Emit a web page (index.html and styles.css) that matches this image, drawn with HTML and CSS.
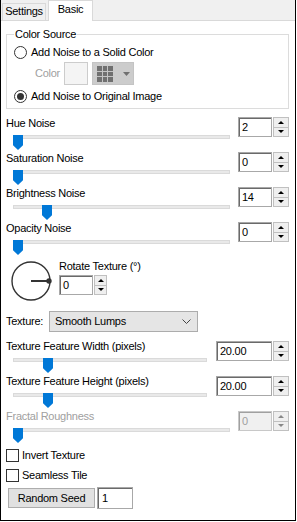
FILE: index.html
```html
<!DOCTYPE html>
<html lang="en">
<head>
    <meta charset="UTF-8">
    <meta name="viewport" content="width=device-width, initial-scale=1.0">
    <title>Noise Effect</title>
    <link rel="stylesheet" href="styles.css">
</head>
<body>
    <div class="window">
        <div class="tabs">
            <div class="tab">Settings</div>
            <div class="tab tab-active">Basic</div>
        </div>
        <div class="page">
            <fieldset class="group">
                <legend>Color Source</legend>
                <div class="option"><span class="radio"></span>Add Noise to a Solid Color</div>
                <div class="color-row">
                    <span class="color-label">Color</span>
                    <span class="swatch"></span>
                    <span class="palette-btn">
                        <svg width="16" height="16" viewBox="0 0 16 16">
                            <rect x="0" y="0" width="16" height="16" fill="#707070"/>
                            <rect x="5" y="0" width="1" height="16" fill="#c4c4c4"/>
                            <rect x="10" y="0" width="1" height="16" fill="#c4c4c4"/>
                            <rect x="0" y="5" width="16" height="1" fill="#c4c4c4"/>
                            <rect x="0" y="10" width="16" height="1" fill="#c4c4c4"/>
                        </svg>
                        <svg class="palette-arrow" width="7" height="4" viewBox="0 0 7 4">
                            <polygon points="0,0 7,0 3.5,4" fill="#707070"/>
                        </svg>
                    </span>
                </div>
                <div class="option option-last"><span class="radio checked"></span>Add Noise to Original Image</div>
            </fieldset>

            <div class="slider-row first">
                <div class="slider-main">
                    <div class="label">Hue Noise</div>
                    <div class="slider"><div class="track"></div><div class="thumb" style="left: 0px"></div></div>
                </div>
                <div class="spin">
                    <div class="spin-value">2</div>
                    <div class="spin-arrows"><span class="up"></span><span class="down"></span></div>
                </div>
            </div>

            <div class="slider-row">
                <div class="slider-main">
                    <div class="label">Saturation Noise</div>
                    <div class="slider"><div class="track"></div><div class="thumb" style="left: 0px"></div></div>
                </div>
                <div class="spin">
                    <div class="spin-value">0</div>
                    <div class="spin-arrows"><span class="up"></span><span class="down"></span></div>
                </div>
            </div>

            <div class="slider-row">
                <div class="slider-main">
                    <div class="label">Brightness Noise</div>
                    <div class="slider"><div class="track"></div><div class="thumb" style="left: 29px"></div></div>
                </div>
                <div class="spin">
                    <div class="spin-value">14</div>
                    <div class="spin-arrows"><span class="up"></span><span class="down"></span></div>
                </div>
            </div>

            <div class="slider-row">
                <div class="slider-main">
                    <div class="label">Opacity Noise</div>
                    <div class="slider"><div class="track"></div><div class="thumb" style="left: 0px"></div></div>
                </div>
                <div class="spin">
                    <div class="spin-value">0</div>
                    <div class="spin-arrows"><span class="up"></span><span class="down"></span></div>
                </div>
            </div>

            <div class="rotate-row">
                <svg class="dial" width="42" height="42" viewBox="0 0 42 42">
                    <circle cx="21" cy="21" r="19" fill="none" stroke="#333" stroke-width="1.4"/>
                    <line x1="21" y1="21" x2="39" y2="21" stroke="#333" stroke-width="2"/>
                    <circle cx="39" cy="21" r="2.7" fill="#333"/>
                </svg>
                <div class="rotate-main">
                    <div class="label">Rotate Texture (°)</div>
                    <div class="spin spin-small">
                        <div class="spin-value">0</div>
                        <div class="spin-arrows"><span class="up"></span><span class="down"></span></div>
                    </div>
                </div>
            </div>

            <div class="texture-row">
                <span class="texture-label">Texture:</span>
                <div class="dropdown">
                    <span>Smooth Lumps</span>
                    <svg width="9" height="5" viewBox="0 0 9 5">
                        <polyline points="0.5,0.5 4.5,4.5 8.5,0.5" fill="none" stroke="#444" stroke-width="1"/>
                    </svg>
                </div>
            </div>

            <div class="slider-row lower first-lower">
                <div class="slider-main short">
                    <div class="label">Texture Feature Width (pixels)</div>
                    <div class="slider"><div class="track"></div><div class="thumb" style="left: 30px"></div></div>
                </div>
                <div class="spin spin-wide">
                    <div class="spin-value">20.00</div>
                    <div class="spin-arrows"><span class="up"></span><span class="down"></span></div>
                </div>
            </div>

            <div class="slider-row lower">
                <div class="slider-main short">
                    <div class="label">Texture Feature Height (pixels)</div>
                    <div class="slider"><div class="track"></div><div class="thumb" style="left: 30px"></div></div>
                </div>
                <div class="spin spin-wide">
                    <div class="spin-value">20.00</div>
                    <div class="spin-arrows"><span class="up"></span><span class="down"></span></div>
                </div>
            </div>

            <div class="slider-row lower disabled">
                <div class="slider-main">
                    <div class="label">Fractal Roughness</div>
                    <div class="slider"><div class="track"></div><div class="thumb" style="left: 0px"></div></div>
                </div>
                <div class="spin">
                    <div class="spin-value">0</div>
                    <div class="spin-arrows"><span class="up"></span><span class="down"></span></div>
                </div>
            </div>

            <div class="check-row first-check"><span class="checkbox"></span>Invert Texture</div>
            <div class="check-row"><span class="checkbox"></span>Seamless Tile</div>

            <div class="seed-row">
                <div class="button">Random Seed</div>
                <div class="seed-input">1</div>
            </div>
        </div>
    </div>
</body>
</html>
```

FILE: styles.css
```css
body {
    margin: 0;
    background: #fff;
}
.window {
    width: 294px;
    height: 520px;
    border: 1px solid #000;
    border-top: none;
    background: #fff;
    font-family: "Liberation Sans", Arial, sans-serif;
    font-size: 11px;
    line-height: 13px;
    letter-spacing: -0.25px;
    color: #000;
    overflow: hidden;
}

/* tab strip */
.tabs {
    display: flex;
    align-items: flex-end;
    height: 20px;
    background: #f0f0f0;
    border-bottom: 1px solid #d9d9d9;
}
.tab {
    box-sizing: border-box;
    width: 44px;
    height: 17px;
    margin-left: 1px;
    padding-top: 1px;
    border: 1px solid #d9d9d9;
    border-bottom: none;
    text-align: center;
}
.tab-active {
    width: 45px;
    height: 21px;
    margin-left: 2px;
    margin-bottom: -1px;
    padding-top: 2px;
    background: #fff;
    position: relative;
}

.page {
    padding: 0 6px 0 5px;
}

/* color source group */
.group {
    margin: 7px 0 0;
    padding: 5px 0 4px 7px;
    border: 1px solid #dcdcdc;
    min-width: 0;
}
.group legend {
    padding: 0 1px;
    line-height: 12px;
}
.option {
    display: flex;
    align-items: center;
    height: 15px;
}
.radio {
    box-sizing: border-box;
    width: 13px;
    height: 13px;
    margin-right: 4px;
    border: 1px solid #333;
    border-radius: 50%;
    background: #fff;
    display: flex;
    align-items: center;
    justify-content: center;
}
.radio.checked::after {
    content: "";
    width: 7px;
    height: 7px;
    border-radius: 50%;
    background: #333;
}
.color-row {
    display: flex;
    align-items: center;
    height: 23px;
    margin: 2px 0 4px;
}
.color-label {
    width: 29px;
    margin-left: 21px;
    color: #a0a0a0;
}
.swatch {
    box-sizing: border-box;
    width: 24px;
    height: 23px;
    border: 1px solid #cccccc;
    background: #f4f4f4;
}
.palette-btn {
    box-sizing: border-box;
    width: 42px;
    height: 23px;
    margin-left: 4px;
    padding-left: 4px;
    border: 1px solid #c4c4c4;
    background: #cccccc;
    display: flex;
    align-items: center;
}
.palette-arrow {
    margin-left: 10px;
}

/* slider rows */
.slider-row {
    display: flex;
    justify-content: space-between;
    height: 35px;
}
.slider-row.first {
    margin-top: 8px;
}
.slider-main {
    width: 224px;
}
.slider-main.short {
    width: 201px;
}
.slider {
    position: relative;
    height: 15px;
    margin: 1px 0 0 7px;
}
.lower .slider {
    margin-top: 3px;
}
.track {
    box-sizing: border-box;
    height: 4px;
    margin-top: 5px;
    border: 1px solid #dadada;
    background: #e9e9e9;
}
.thumb {
    position: absolute;
    top: 0;
    width: 10px;
    height: 15px;
    background: #0078d7;
    clip-path: polygon(0 0, 100% 0, 100% 68%, 50% 100%, 0 68%);
}
.disabled .label {
    color: #a0a0a0;
}

/* numeric up/down */
.spin {
    display: flex;
    width: 51px;
    height: 20px;
}
.lower .spin {
    margin-top: 1px;
}
.spin-wide {
    width: 73px;
}
.spin-value {
    flex: 1;
    box-sizing: border-box;
    height: 20px;
    padding: 3px 0 0 3px;
    border: 1px solid #a8a8a8;
    box-shadow: inset 1px 1px 0 #6a6a6a;
    background: #fff;
}
.spin-arrows {
    box-sizing: border-box;
    width: 16px;
    margin-left: 1px;
    border: 1px solid #c0c0c0;
    display: flex;
    flex-direction: column;
}
.spin-arrows span {
    flex: 1;
    display: flex;
    align-items: center;
    justify-content: center;
    background: #efefef;
}
.spin-arrows .up {
    border-bottom: 1px solid #c0c0c0;
}
.spin-arrows .up::after {
    content: "";
    border-left: 3px solid transparent;
    border-right: 3px solid transparent;
    border-bottom: 3px solid #000;
}
.spin-arrows .down::after {
    content: "";
    border-left: 3px solid transparent;
    border-right: 3px solid transparent;
    border-top: 3px solid #000;
}
.disabled .spin-value {
    background: #f0f0f0;
    color: #a0a0a0;
    border-color: #c8c8c8;
    box-shadow: inset 1px 1px 0 #a0a0a0;
}
.disabled .spin-arrows span::after {
    border-top-color: #888;
    border-bottom-color: #888;
}

/* rotation dial */
.rotate-row {
    display: flex;
    margin-top: 3px;
}
.dial {
    margin-left: 4px;
}
.rotate-main {
    margin-left: 7px;
}
.spin-small {
    width: 48px;
    margin-top: 2px;
}
.spin-small .spin-arrows {
    width: 13px;
    margin-left: 1px;
}

/* texture dropdown */
.texture-row {
    display: flex;
    align-items: center;
    height: 21px;
    margin-top: 9px;
}
.texture-label {
    width: 43px;
}
.dropdown {
    box-sizing: border-box;
    width: 149px;
    height: 21px;
    padding: 0 6px 0 5px;
    border: 1px solid #acacac;
    background: #e5e5e5;
    display: flex;
    align-items: center;
    justify-content: space-between;
}
.slider-row.first-lower {
    margin-top: 8px;
}

/* check boxes */
.check-row {
    display: flex;
    align-items: center;
    height: 15px;
    margin-top: 5px;
}
.check-row.first-check {
    margin-top: 3px;
}
.checkbox {
    box-sizing: border-box;
    width: 13px;
    height: 13px;
    margin-right: 3px;
    border: 1px solid #333;
    background: #fff;
}

/* seed */
.seed-row {
    display: flex;
    align-items: center;
    height: 22px;
    margin-top: 4px;
}
.button {
    box-sizing: border-box;
    width: 87px;
    height: 20px;
    margin-left: 2px;
    border: 1px solid #adadad;
    background: #e1e1e1;
    text-align: center;
    line-height: 18px;
}
.seed-input {
    box-sizing: border-box;
    width: 36px;
    height: 22px;
    margin-left: 2px;
    padding: 4px 0 0 4px;
    border: 1px solid #a8a8a8;
    box-shadow: inset 1px 1px 0 #6a6a6a;
    background: #fff;
}
```
